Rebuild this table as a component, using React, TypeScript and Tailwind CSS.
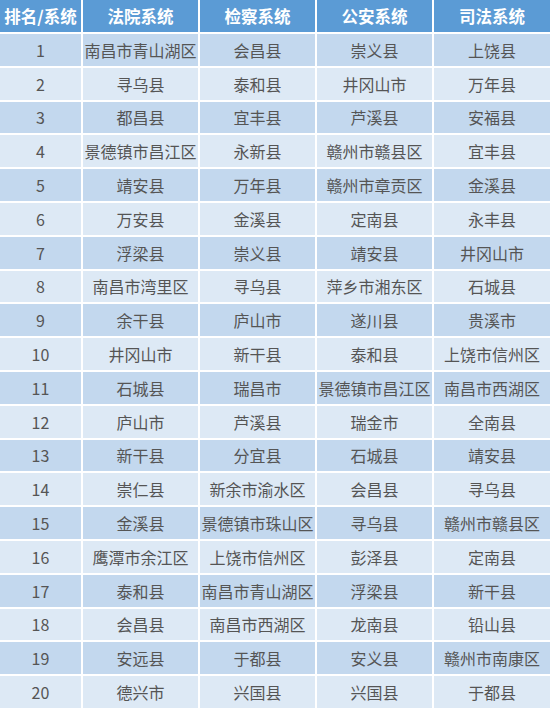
const rows: string[][] = [
  ["1", "南昌市青山湖区", "会昌县", "崇义县", "上饶县"],
  ["2", "寻乌县", "泰和县", "井冈山市", "万年县"],
  ["3", "都昌县", "宜丰县", "芦溪县", "安福县"],
  ["4", "景德镇市昌江区", "永新县", "赣州市赣县区", "宜丰县"],
  ["5", "靖安县", "万年县", "赣州市章贡区", "金溪县"],
  ["6", "万安县", "金溪县", "定南县", "永丰县"],
  ["7", "浮梁县", "崇义县", "靖安县", "井冈山市"],
  ["8", "南昌市湾里区", "寻乌县", "萍乡市湘东区", "石城县"],
  ["9", "余干县", "庐山市", "遂川县", "贵溪市"],
  ["10", "井冈山市", "新干县", "泰和县", "上饶市信州区"],
  ["11", "石城县", "瑞昌市", "景德镇市昌江区", "南昌市西湖区"],
  ["12", "庐山市", "芦溪县", "瑞金市", "全南县"],
  ["13", "新干县", "分宜县", "石城县", "靖安县"],
  ["14", "崇仁县", "新余市渝水区", "会昌县", "寻乌县"],
  ["15", "金溪县", "景德镇市珠山区", "寻乌县", "赣州市赣县区"],
  ["16", "鹰潭市余江区", "上饶市信州区", "彭泽县", "定南县"],
  ["17", "泰和县", "南昌市青山湖区", "浮梁县", "新干县"],
  ["18", "会昌县", "南昌市西湖区", "龙南县", "铅山县"],
  ["19", "安远县", "于都县", "安义县", "赣州市南康区"],
  ["20", "德兴市", "兴国县", "兴国县", "于都县"],
];

const header = ["排名/系统", "法院系统", "检察系统", "公安系统", "司法系统"];

const cols = "grid grid-cols-[81px_115px_115px_115px_1fr] gap-[2px]";

export default function App() {
  return (
    <div
      className="w-[550px] h-[708px] bg-white flex flex-col gap-[2px] overflow-hidden"
      style={{ fontFamily: '"Noto Sans CJK SC", "Noto Sans", sans-serif' }}
    >
      <div className={`${cols} h-[32px]`}>
        {header.map((h) => (
          <div
            key={h}
            className="bg-[#5b9bd5] text-white font-bold text-[16.5px] flex items-center justify-center whitespace-nowrap"
          >
            {h}
          </div>
        ))}
      </div>
      {rows.map((r, i) => (
        <div key={r[0]} className={`${cols} h-[31.8px]`}>
          {r.map((c, j) => (
            <div
              key={j}
              className={`${
                i % 2 === 0 ? "bg-[#c3d8ee]" : "bg-[#dde9f5]"
              } text-[#555555] text-[16px] flex items-center justify-center whitespace-nowrap`}
            >
              {c}
            </div>
          ))}
        </div>
      ))}
    </div>
  );
}
